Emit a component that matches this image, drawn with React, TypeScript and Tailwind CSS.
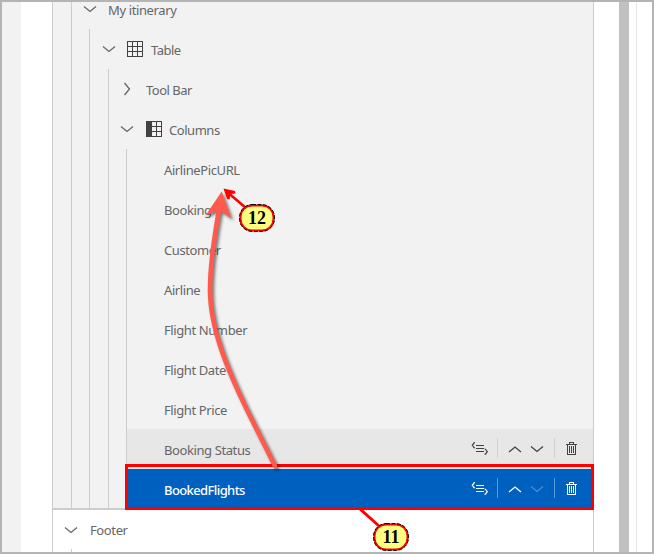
import type { ReactNode } from "react";

function Chevron({ dir = "down", className = "" }: { dir?: "down" | "up" | "right"; className?: string }) {
  const d = { down: "M1 4.5 L7 9.5 L13 4.5", up: "M1 10 L7 5 L13 10", right: "M4.5 1 L9.5 7 L4.5 13" }[dir];
  return (
    <svg width="14" height="14" viewBox="0 0 14 14" className={`shrink-0 ${className}`} fill="none" stroke="currentColor" strokeWidth="1.3">
      <path d={d} />
    </svg>
  );
}

function GridIcon({ filled = false }: { filled?: boolean }) {
  return (
    <svg width="16" height="16" viewBox="0 0 16 16" className="shrink-0 text-[#424242]" fill="none" stroke="currentColor" shapeRendering="crispEdges">
      <rect x="0.5" y="0.5" width="15" height="15" />
      {filled && <rect x="0" y="0" width="6" height="16" fill="currentColor" stroke="none" />}
      <path d="M5.5 0V16M10.5 0V16M0 5.5H16M0 10.5H16" />
    </svg>
  );
}

function RowActions({ selected = false }: { selected?: boolean }) {
  const line = selected ? "bg-[#5c9bdb]" : "bg-[#d0d0d0]";
  return (
    <div className={`mb-0.5 ml-auto flex items-center ${selected ? "text-white" : "text-[#424242]"}`}>
      <svg width="18" height="14" viewBox="0 0 18 14" className="mt-0.5" fill="none" stroke="currentColor" strokeWidth="1.2">
        <path d="M4 0.7Q2.4 0.7 2.4 2L1.3 3.3L2.4 4.6Q2.4 6 4 6M13.5 7Q15.2 7 15.2 8.4L16.3 9.7L15.2 11Q15.2 12.3 13.5 12.3" />
        <path d="M5 3.5H13M5 6.5H13M5 9.5H13" shapeRendering="crispEdges" />
      </svg>
      <span className={`ml-2 h-5 w-px ${line}`} />
      <Chevron dir="up" className="ml-[10px] mt-0.5" />
      <Chevron className={selected ? "ml-2 mt-0.5 text-[#4a8fd2]" : "ml-2 mt-0.5"} />
      <span className={`ml-[10px] h-5 w-px ${line}`} />
      <svg width="11" height="14" viewBox="0 0 11 14" className="ml-[11px] mr-4 mt-0.5" fill="none" stroke="currentColor" shapeRendering="crispEdges">
        <path d="M0 2.5H11M3.5 2V0.5H7.5V2M1.5 3V12.5H9.5V3M3.5 4V11M5.5 4V11M7.5 4V11" />
      </svg>
    </div>
  );
}

function Row({ className = "", children }: { className?: string; children: ReactNode }) {
  return <div className={`flex h-10 items-center ${className}`}>{children}</div>;
}

function Label({ className = "tracking-[-0.4px]", children }: { className?: string; children: ReactNode }) {
  return <span className={`whitespace-nowrap pt-px leading-5 ${className}`}>{children}</span>;
}

const columns = ["AirlinePicURL", "Booking", "Customer", "Airline", "Flight Number", "Flight Date", "Flight Price"];

function Callout({ cx, cy, text }: { cx: number; cy: number; text: string }) {
  return (
    <g>
      <rect x={cx - 16.5} y={cy - 12.5} width="33" height="25" rx="11.5" fill="#ffff80" stroke="#ff0000" strokeWidth="2" />
      <rect x={cx - 17.4} y={cy - 13.4} width="34.8" height="26.8" rx="12.4" fill="none" stroke="#000" strokeWidth="1" strokeDasharray="4 1.5" />
      <text x={cx} y={cy + 6} textAnchor="middle" fontSize="18" fontWeight="700" fill="#000" className="font-['Liberation_Serif',serif]">
        {text}
      </text>
    </g>
  );
}

function Annotations() {
  return (
    <svg width="654" height="554" viewBox="0 0 654 554" className="pointer-events-none absolute -left-0.5 -top-0.5">
      <rect x="126.5" y="465.5" width="466" height="43" fill="none" stroke="#ff0000" strokeWidth="3" />
      <g className="drop-shadow-[2px_2px_1.5px_rgba(0,0,0,0.5)]">
        <path d="M275 466 L247 410 C232 379 210 332 210 290 C210 262 215 232 219.5 207" fill="none" stroke="#ff5a4d" strokeWidth="4.6" strokeLinecap="round" />
        <path d="M221.7 191.5 L205.5 215.5 L219 210 L231.5 218.5 Z" fill="#ff5a4d" />
      </g>
      <path d="M246 208 L226 191" stroke="#ff0000" strokeWidth="2.6" />
      <path d="M223.5 188.5 L235 191 L235.5 193.5 L230.5 194 L229.5 199.5 L227 199 Z" fill="#ff0000" />
      <path d="M360 509 L379 526" stroke="#ff0000" strokeWidth="3" />
      <Callout cx={257} cy={218} text="12" />
      <Callout cx={391} cy={537} text="11" />
    </svg>
  );
}

export default function App() {
  return (
    <div className="relative flex h-[554px] w-[654px] overflow-hidden border-2 border-[#b4b4b4] bg-white font-['Noto_Sans','Open_Sans',sans-serif] text-[13px] text-[#666666]">
      <div className="w-[19px] shrink-0 bg-[#f2f2f2]" />
      <main className="ml-[31px] w-[542px] shrink-0 border-x border-[#cccccc]">
        <div className="h-[506px] overflow-hidden bg-[#f2f2f2] pl-[18px]">
          <div className="-mt-[13px] h-[519px] border-l border-[#cccccc]">
            <Row className="pl-[11px]">
              <Chevron />
              <Label className="ml-[11px] tracking-[-0.38px]">My itinerary</Label>
            </Row>
            <div className="ml-[17px] h-[480px] border-l border-[#cccccc]">
              <Row className="pl-3">
                <Chevron />
                <span className="ml-[11px]"><GridIcon /></span>
                <Label className="ml-2 tracking-[-0.5px]">Table</Label>
              </Row>
              <div className="ml-[18px] h-[440px] border-l border-[#cccccc]">
                <Row className="pl-[11px]">
                  <Chevron dir="right" />
                  <Label className="ml-3 tracking-[-0.5px]">Tool Bar</Label>
                </Row>
                <Row className="pl-[11px]">
                  <Chevron />
                  <span className="ml-3"><GridIcon filled /></span>
                  <Label className="ml-[7px] tracking-[-0.45px]">Columns</Label>
                </Row>
                <div className="ml-[17px] border-l border-[#cccccc]">
                  {columns.map((name) => (
                    <Row key={name} className="pl-[37px]">
                      <Label>{name}</Label>
                    </Row>
                  ))}
                  <Row className="bg-[#e7e7e7] pl-[37px]">
                    <Label>Booking Status</Label>
                    <RowActions />
                  </Row>
                  <Row className="bg-[#0060c0] pl-[37px] text-white">
                    <Label className="font-medium tracking-[-0.6px]">BookedFlights</Label>
                    <RowActions selected />
                  </Row>
                </div>
              </div>
            </div>
          </div>
        </div>
        <div className="border-t-2 border-[#cccccc]">
          <Row className="h-[39px] pl-[11px]">
            <Chevron />
            <Label className="ml-3 tracking-[-0.38px]">Footer</Label>
          </Row>
          <div className="ml-[18px] h-3 border-l border-[#cccccc]" />
        </div>
      </main>
      <div className="ml-[25px] w-[10px] shrink-0 bg-[#c1c1c1]" />
      <div className="ml-[7px] w-px shrink-0 bg-[#e5e5e5]" />
      <Annotations />
    </div>
  );
}
